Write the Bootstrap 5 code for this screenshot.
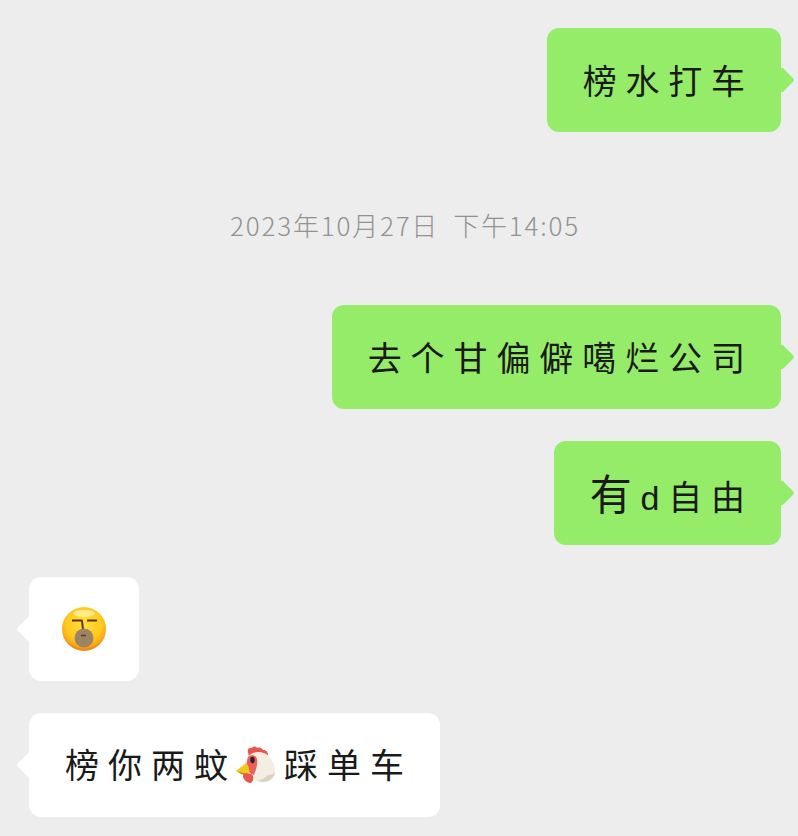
<!DOCTYPE html>
<html lang="zh">
<head>
<meta charset="utf-8">
<link rel="stylesheet" href="https://cdn.jsdelivr.net/npm/bootstrap@5.3.0/dist/css/bootstrap.min.css">
<style>
html,body{height:100%;}
body{background:#ededed;font-family:"Noto Sans CJK SC","Liberation Sans",sans-serif;color:#1a1a1a;overflow:hidden;}
.chat-log{padding:28px 17px 0 29px;gap:32px;}
.bubble-msg{height:104px;border-radius:12px;padding:0 36px;font-size:34px;line-height:1;white-space:nowrap;}
.bubble-msg::after{content:"";position:absolute;top:50%;width:19px;height:19px;border-radius:3px;transform:translateY(-50%) rotate(45deg);background:inherit;}
.bubble-out{background:#95ec69;}
.bubble-out::after{right:-9.500px;}
.bubble-in{background:#fff;}
.bubble-in::after{left:-9.500px;}
.track-a{letter-spacing:8.750px;margin-right:-8.750px;}
.track-b{letter-spacing:8.920px;margin-right:-8.920px;}
.track-c{letter-spacing:9px;margin-right:-9px;}
.glyph-big{font-size:42px;}
.glyph-latin{font-family:"Liberation Sans",sans-serif;font-size:34px;}
.time-stamp{color:#929292;font-size:26px;line-height:36px;letter-spacing:1.800px;margin:43px 0 30px;font-weight:300;}
.time-gap{margin-left:14px;}
.bubble-emoji{padding:0 32px;}
.emoji-inline{width:42px;height:42px;margin:0 7px 0 -2px;vertical-align:-8px;}
.emoji-face{width:46px;height:46px;}
</style>
</head>
<body>
<main class="chat-log d-flex flex-column">
  <div class="bubble-msg bubble-out position-relative d-flex align-items-center align-self-end"><span class="track-a">榜水打车</span></div>
  <div class="time-stamp text-center">2023年10月27日<span class="time-gap">下午14:05</span></div>
  <div class="bubble-msg bubble-out position-relative d-flex align-items-center align-self-end"><span class="track-b">去个甘偏僻噶烂公司</span></div>
  <div class="bubble-msg bubble-out position-relative d-flex align-items-center align-self-end"><span class="track-a"><span class="glyph-big">有</span><span class="glyph-latin">d</span>自由</span></div>
  <div class="bubble-msg bubble-in bubble-emoji position-relative d-flex align-items-center align-self-start">
    <svg class="emoji-face" viewBox="0 0 46 46" role="img" aria-label="emoji">
      <defs><radialGradient id="faceFill" cx="50%" cy="38%" r="58%"><stop offset="0" stop-color="#ffe03d"/><stop offset=".7" stop-color="#ffc81e"/><stop offset=".92" stop-color="#f9a814"/><stop offset="1" stop-color="#ee8a12"/></radialGradient></defs>
      <circle cx="23" cy="23" r="22" fill="url(#faceFill)"/>
      <ellipse cx="23" cy="7.500" rx="11" ry="3.500" fill="#fff3a8" opacity=".75"/>
      <path d="M11 14.500h10.500M21 14.500l1 9.500M26 14.500h10" stroke="#5f3208" stroke-width="2" fill="none"/>
      <circle cx="23" cy="32" r="9.500" fill="#9c8465"/>
      <path d="M20 29.500h5" stroke="#5e3a16" stroke-width="1.500"/>
    </svg>
  </div>
  <div class="bubble-msg bubble-in position-relative d-flex align-items-center align-self-start"><span class="track-c">榜你两蚊<svg class="emoji-inline" viewBox="0 0 42 42" role="img" aria-label="chicken">
      <path d="M13 8c-1-3 2-5 4-4 1-2 4-2 5 0 2-1 5 0 6 2 3 0 5 2 5 5l-8 3-11-1z" fill="#e8544e"/>
      <path d="M13 13c3-5 10-6 16-4 7 3 11 12 11 19 0 7-6 10-13 10-6 0-11-3-13-8-2-6-3-12-1-17z" fill="#f4ede1"/>
      <path d="M33 31c3 0 6-1 7-4 0 7-6 11-12 11-2 0-4-1-5-2 4 0 7-2 10-5z" fill="#dcd2c1"/>
      <path d="M13 13c3-3 8-2 9 2 1 5-1 11-3 16-3-1-6-3-7-7-1-3 0-8 1-11z" fill="#ea5f5a"/>
      <ellipse cx="17.500" cy="16" rx="2.200" ry="3.300" fill="#2d2326"/>
      <path d="M11 19 1 27c3 3 9 3 13 2 1-3 0-7-3-10z" fill="#f6c81c"/>
      <path d="M3 27.500c3 1 7 1.500 10.500 1.500l-3 2c-3 0-6-1.500-7.500-3.500z" fill="#c98a12"/>
      <path d="M8 31c3-2 8-2 9.500 0 1.500 3 .5 8-2.500 8s-7.500-4-7-8z" fill="#e8544e"/>
    </svg>踩单车</span></div>
</main>
<script src="https://cdn.jsdelivr.net/npm/bootstrap@5.3.0/dist/js/bootstrap.bundle.min.js"></script>
</body>
</html>
